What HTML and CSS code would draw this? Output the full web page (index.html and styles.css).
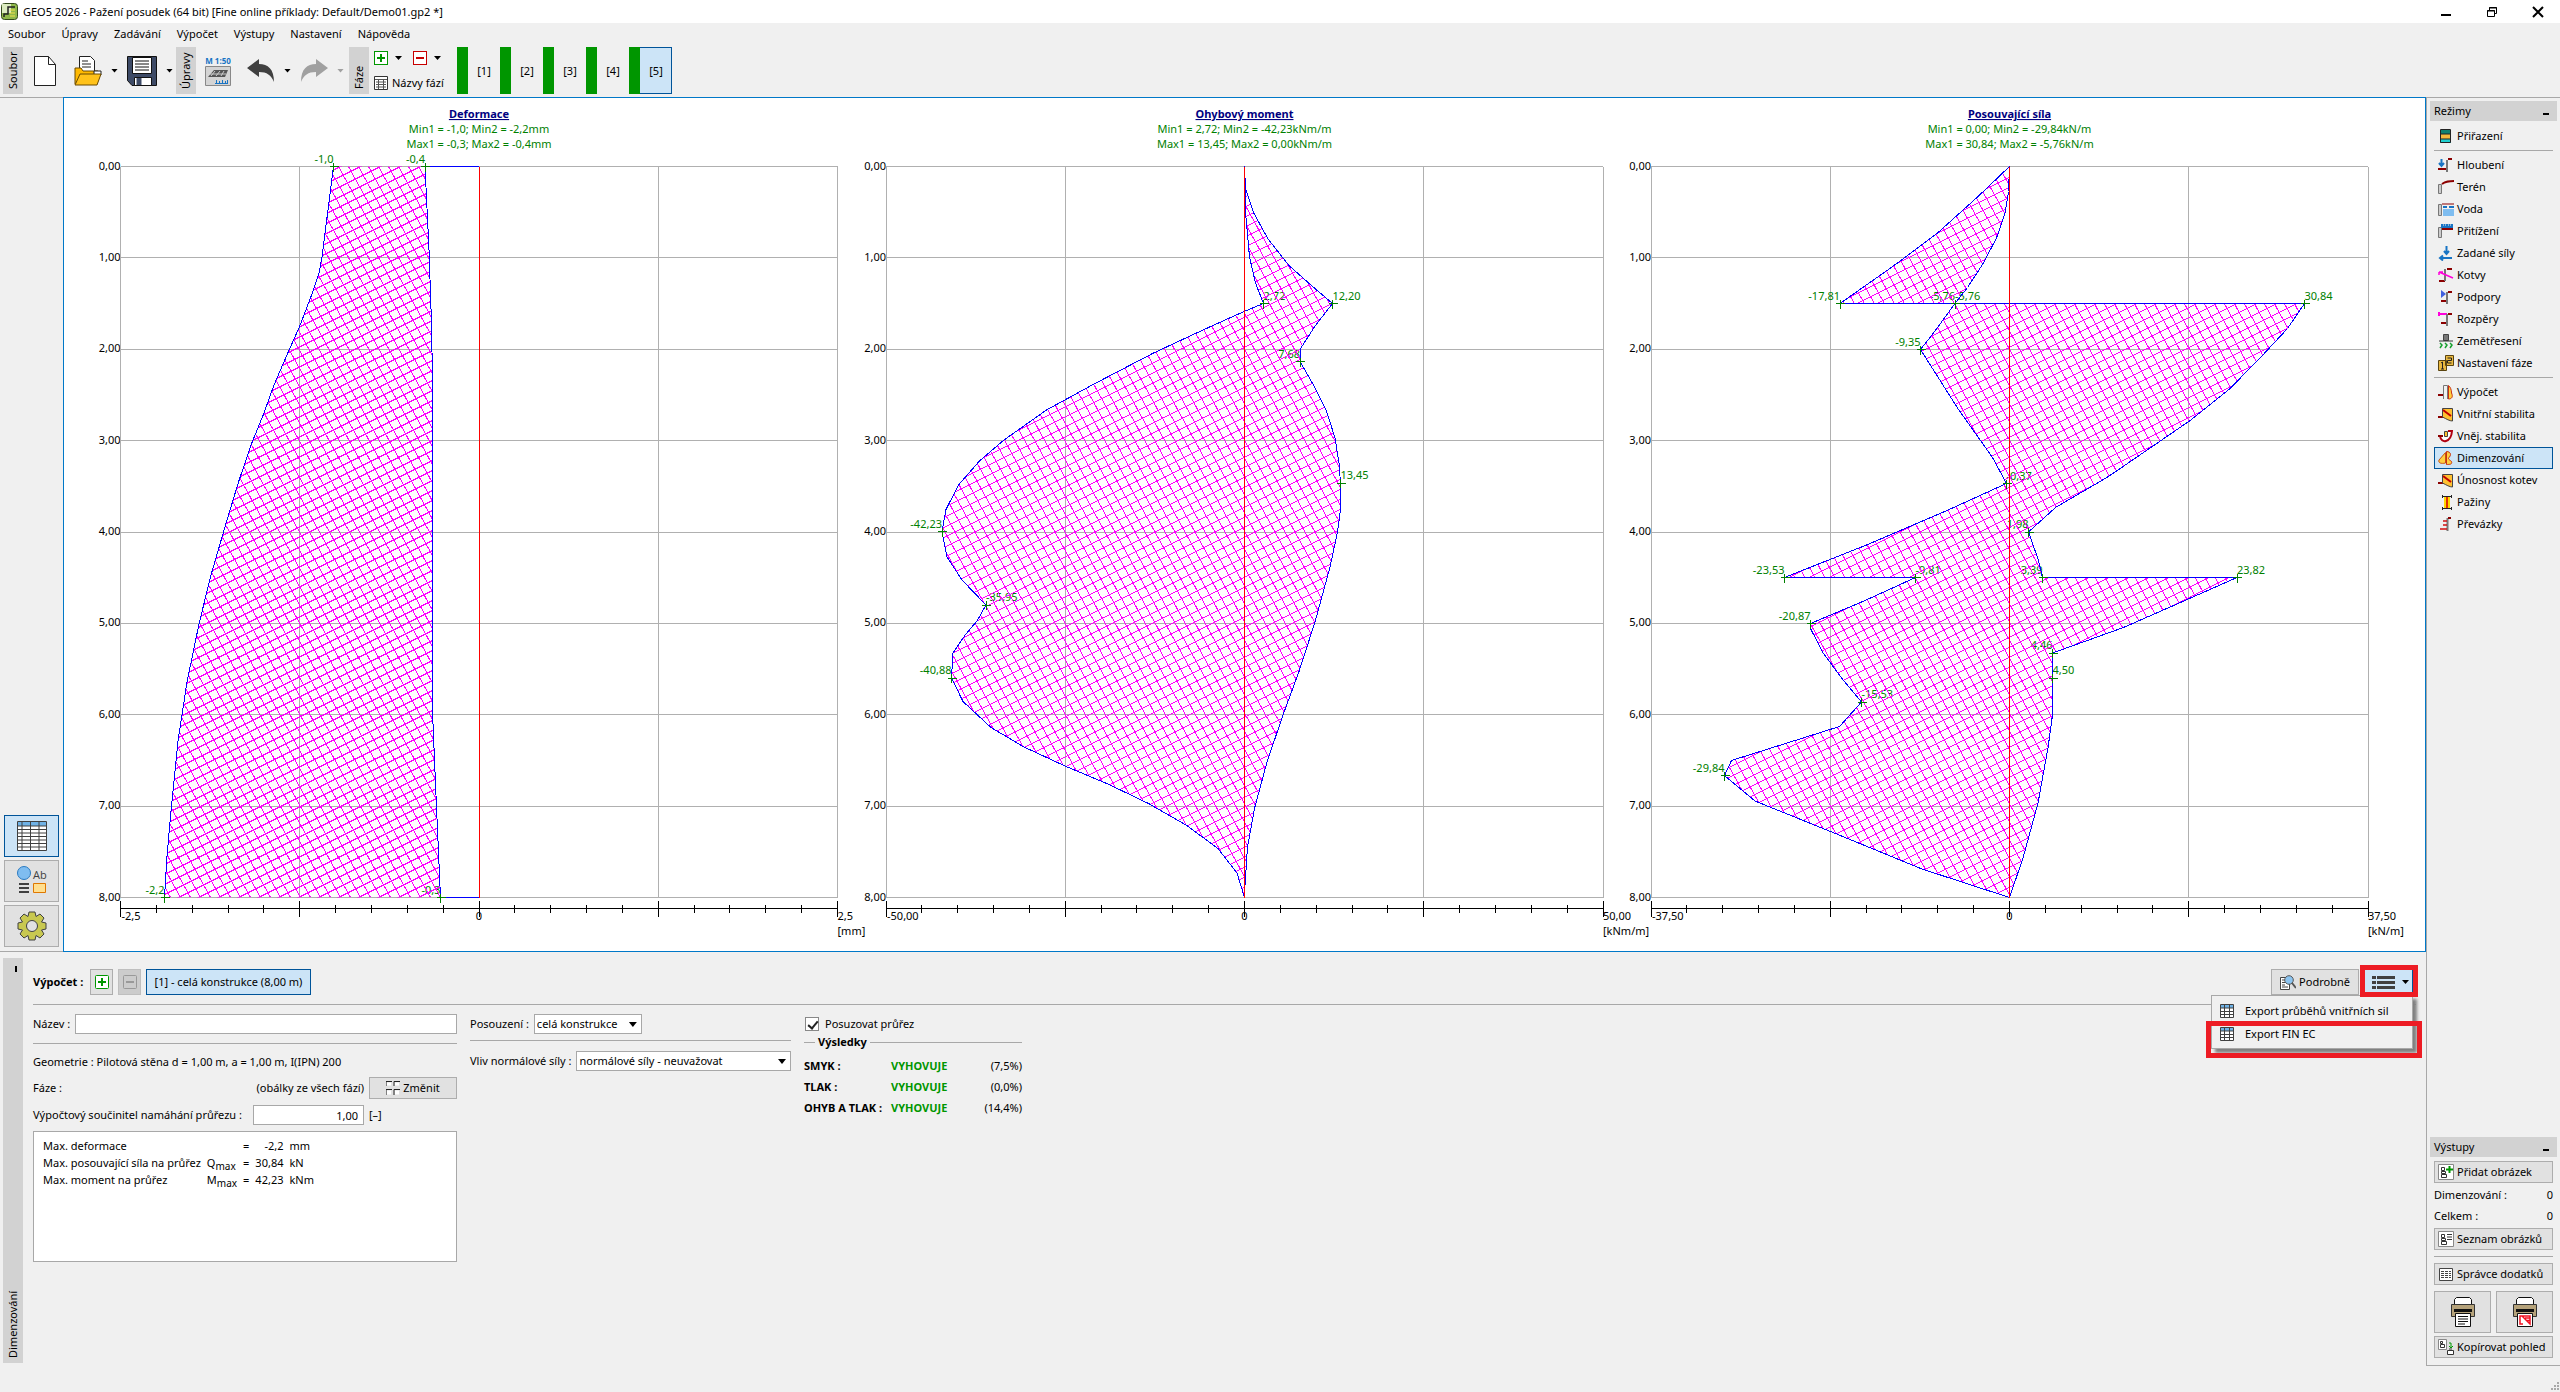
FILE: index.html
```html
<!DOCTYPE html>
<html lang="cs">
<head>
<meta charset="utf-8">
<title>GEO5 2026 - Pažení posudek</title>
<link rel="stylesheet" href="styles.css">
</head>
<body>
<header class="titlebar">
  <svg class="app-icon" width="17" height="17" viewBox="0 0 17 17"><rect x=".5" y=".5" width="16" height="16" rx="3" fill="#8fb84a" stroke="#33491c"/><path d="M1 1h9v9H1z" fill="#dcebc0"/><path d="M3 14V11H7V4H14" fill="none" stroke="#222" stroke-width="1.5"/><path d="M9 7h5M9 10h5M9 13h5" stroke="#f4e04a"/></svg>
  <h1 class="title">GEO5 2026 - Pažení posudek (64 bit) [Fine online příklady: Default/Demo01.gp2 *]</h1>
  <div class="window-buttons">
    <button aria-label="Minimalizovat"><svg width="12" height="12" viewBox="0 0 12 12"><path d="M1 9h10" stroke="#000" stroke-width="2"/></svg></button>
    <button aria-label="Obnovit"><svg width="12" height="12" viewBox="0 0 12 12" fill="none" stroke="#000"><path d="M1.500 4.500h7v6h-7zM1 5h8M3.500 4V1.500h7v6H9M3 2h8"/></svg></button>
    <button aria-label="Zavřít"><svg width="12" height="12" viewBox="0 0 12 12"><path d="M1 1l10 10M11 1L1 11" stroke="#000" stroke-width="2"/></svg></button>
  </div>
</header>
<nav class="menubar">
  <button>Soubor</button><button>Úpravy</button><button>Zadávání</button><button>Výpočet</button><button>Výstupy</button><button>Nastavení</button><button>Nápověda</button>
</nav>
<div class="toolbar">
  <span class="grip">Soubor</span>
  <div class="tools tools-file">
    <button aria-label="Nový"><svg width="22" height="30" viewBox="0 0 22 30"><path d="M.5.5h14l7 8v21H.5z" fill="#fff" stroke="#222"/><path d="M14.500.5v8h7" fill="none" stroke="#222"/></svg></button>
    <button aria-label="Otevřít"><svg width="28" height="30" viewBox="0 0 28 30"><path d="M5.500.5h11l4 4v15h-15z" fill="#fff" stroke="#222"/><path d="M8 5h6M8 8h9M8 11h9" stroke="#222"/><path d="M1 28V12h6l2 3h15v3" fill="#ffb900" stroke="#6b4a00"/><path d="M20 15h7v4h-7z" fill="#fff" stroke="#222"/><path d="M1 29l5-11h21l-4 11z" fill="#ffc21a" stroke="#6b4a00"/></svg></button>
    <button class="drop" aria-label="Poslední soubory"><i class="caret"></i></button>
    <button aria-label="Uložit"><svg width="30" height="30" viewBox="0 0 30 30"><path d="M.5.5h29v29H5l-4.500-5z" fill="#3d4a66" stroke="#111"/><path d="M5.500 1.500h19v16h-19z" fill="#fff" stroke="#111"/><path d="M8 5h14M8 8h14M8 11h14M8 14h14" stroke="#111"/><path d="M7.500 21.500h17v8h-17z" fill="#fff" stroke="#111"/><path d="M9.500 22h5v7h-5z" fill="#3d4a66"/></svg></button>
    <button class="drop" aria-label="Uložit jako"><i class="caret"></i></button>
  </div>
  <span class="grip">Úpravy</span>
  <div class="tools tools-edit">
    <button aria-label="Měřítko"><svg width="26" height="30" viewBox="0 0 26 30"><text x="13" y="8" text-anchor="middle" class="scale-text">M 1:50</text><path d="M.5 10.500h25v19H.5z" fill="#d4d4d4" stroke="#888"/><path d="M3 21l6-7h14l-3 7z" fill="#555"/><path d="M6 20l4-5M11 20l4-5M16 20l3-5M5 18h16" stroke="#ccc"/><path d="M10 27.500h13M11.500 27v-3M14.500 27v-2M17.500 27v-3M20.500 27v-2M22.500 27v-3" stroke="#1874c4"/></svg></button>
    <button aria-label="Zpět"><svg width="28" height="24" viewBox="0 0 28 24"><path d="M0 9L12 0v5c9 0 15 5 15 18-3-7-7-10-15-10v5z" fill="#404040"/></svg></button>
    <button class="drop" aria-label="Historie zpět"><i class="caret"></i></button>
    <button aria-label="Znovu" disabled><svg width="28" height="24" viewBox="0 0 28 24"><path d="M28 9L16 0v5C7 5 1 10 1 23c3-7 7-10 15-10v5z" fill="#a0a0a0"/></svg></button>
    <button class="drop" aria-label="Historie znovu" disabled><i class="caret caret-off"></i></button>
  </div>
  <span class="grip">Fáze</span>
  <div class="stage-tools">
    <div class="stage-row">
      <button aria-label="Přidat fázi"><svg width="14" height="14" viewBox="0 0 14 14"><rect x=".5" y=".5" width="13" height="13" fill="#fff" stroke="#009600"/><path d="M7 3v8M3 7h8" stroke="#009600" stroke-width="2"/></svg></button><i class="caret"></i>
      <button aria-label="Odebrat fázi"><svg width="14" height="14" viewBox="0 0 14 14"><rect x=".5" y=".5" width="13" height="13" fill="#fff" stroke="#c80000"/><path d="M3 7h8" stroke="#c80000" stroke-width="2"/></svg></button><i class="caret"></i>
    </div>
    <button class="stage-names"><svg width="14" height="14" viewBox="0 0 14 14"><path d="M.5.5h13v13H.5z" fill="#fff" stroke="#333"/><path d="M1 3.500h12M2 6h10M2 8.500h10M2 11h10M4.500 3v10M9.500 3v10" stroke="#555"/></svg>Názvy fází</button>
  </div>
  <div class="stages">
    <button>[1]</button><button>[2]</button><button>[3]</button><button>[4]</button><button class="active">[5]</button>
  </div>
</div>
<main class="workspace">
  <div class="work">
    <div class="view">
      <aside class="view-tools">
        <button class="active" aria-label="Tabulka"><svg width="30" height="30" viewBox="0 0 30 30"><path d="M.5.5h29v29H.5z" fill="#fff" stroke="#404040"/><path d="M1 1h28v4H1z" fill="#6fb2e6"/><path d="M1 5h28M1 8.500h28M1 12h28M1 15.500h28M1 19h28M1 22.500h28M1 26h28M5 1v28M13.500 1v28M22 1v28" stroke="#404040"/></svg></button>
        <button aria-label="Nastavení kreslení"><svg width="30" height="30" viewBox="0 0 30 30"><circle cx="7" cy="7" r="6.500" fill="#7fbdf0" stroke="#2a7ac0"/><text x="16" y="13" class="ab-text">Ab</text><path d="M2 18h10M2 22h10M2 26h10" stroke="#404040" stroke-width="2"/><path d="M16.500 17.500h12v9h-12z" fill="#ffdf90" stroke="#e07800"/></svg></button>
        <button aria-label="Nastavení"><svg width="30" height="30" viewBox="-15 -15 30 30"><path d="M-3-14H3L4-9.500 8-12 12-8 9.500-4 14-3V3L9.500 4 12 8 8 12 4 9.500 3 14H-3L-4 9.500-8 12-12 8-9.500 4-14 3V-3L-9.500-4-12-8-8-12-4-9.500z" fill="#c8c850" stroke="#404040"/><circle r="5.500" fill="#e1e1e1" stroke="#404040"/></svg></button>
      </aside>
      <section class="canvas"><svg id="charts" viewBox="64 98 2361 853" role="img" aria-label="Průběhy deformace, momentu a posouvající síly"></svg></section>
    </div>
    <section class="panel">
      <span class="grip panel-grip"><b class="panel-min"></b>Dimenzování</span>
      <div class="panel-body">
        <div class="calc-bar">
          <strong>Výpočet :</strong>
          <button class="btn square" aria-label="Přidat výpočet"><svg width="14" height="14" viewBox="0 0 14 14"><rect x=".5" y=".5" width="13" height="13" rx="1" fill="#fff" stroke="#009600"/><path d="M7 3v8M3 7h8" stroke="#009600" stroke-width="2"/></svg></button>
          <button class="btn square off" aria-label="Odebrat výpočet" disabled><svg width="14" height="14" viewBox="0 0 14 14"><rect x=".5" y=".5" width="13" height="13" rx="1" fill="none" stroke="#999"/><path d="M3 7h8" stroke="#999" stroke-width="2"/></svg></button>
          <button class="btn picked">[1] - celá konstrukce (8,00 m)</button>
          <div class="calc-right">
            <button class="btn detail"><svg width="16" height="15" viewBox="0 0 16 15"><path d="M.5 2.500h9v12h-9z" fill="#fff" stroke="#444"/><path d="M2 5h3M2 7.500h3M2 10h3M2 12h6" stroke="#444"/><circle cx="9" cy="5" r="4.300" fill="#8cc4f0" stroke="#555"/><path d="M12 8l4 5" stroke="#555" stroke-width="2"/></svg>Podrobně</button>
            <div class="export">
              <button class="export-btn" aria-label="Export"><svg width="23" height="13" viewBox="0 0 23 13"><path d="M0 1.500h4M0 6.500h4M0 11.500h4M5 1.500h18M5 6.500h18M5 11.500h18" stroke="#404040" stroke-width="3"/></svg><i class="caret"></i></button>
              <div class="popup">
                <button><svg width="14" height="14" viewBox="0 0 14 14"><path d="M.5.5h13v13H.5z" fill="#fff"/><path d="M1 1h12v3H1z" fill="#6fb2e6"/><path d="M.5.5h13v13H.5zM1 4h12M1 7.500h12M1 10.500h12M4.500 1v12M9.500 1v12" fill="none" stroke="#404040"/></svg>Export průběhů vnitřních sil</button>
                <button><svg width="14" height="14" viewBox="0 0 14 14"><path d="M.5.5h13v13H.5z" fill="#fff"/><path d="M1 1h12v3H1z" fill="#6fb2e6"/><path d="M.5.5h13v13H.5zM1 4h12M1 7.500h12M1 10.500h12M4.500 1v12M9.500 1v12" fill="none" stroke="#404040"/></svg>Export FIN EC</button>
              </div>
              <span class="mark mark-button"></span>
              <span class="mark mark-item"></span>
            </div>
          </div>
        </div>
        <div class="columns">
          <div class="col">
            <div class="field"><label for="name">Název :</label><input id="name" class="grow" type="text"></div>
            <hr>
            <p class="geometry">Geometrie : Pilotová stěna d = 1,00 m, a = 1,00 m, I(IPN) 200</p>
            <div class="field stage-field"><span>Fáze :</span><span class="push">(obálky ze všech fází)</span><button class="btn change"><svg width="14" height="14" viewBox="0 0 14 14"><path d="M0 5V.5h6M8 5V.5h6M0 14V8.500h6M8 14V8.500h6" fill="none" stroke="#222"/><path d="M1 1.500h4v3H1zM9 1.500h4v3H9zM1 9.500h4v4H1zM9 9.500h4v4H9z" fill="#fff"/></svg>Změnit</button></div>
            <div class="field factor"><label for="factor">Výpočtový součinitel namáhání průřezu :</label><input id="factor" class="num push" type="text" value="1,00"><span class="unit">[–]</span></div>
            <div class="summary"><table>
              <tr><td>Max. deformace</td><td></td><td>=</td><td class="r">-2,2</td><td>mm</td></tr>
              <tr><td>Max. posouvající síla na průřez</td><td>Q<sub>max</sub></td><td>=</td><td class="r">30,84</td><td>kN</td></tr>
              <tr><td>Max. moment na průřez</td><td>M<sub>max</sub></td><td>=</td><td class="r">42,23</td><td>kNm</td></tr>
            </table></div>
          </div>
          <div class="col col-mid">
            <div class="field"><label for="scope">Posouzení :</label><span class="select scope"><select id="scope"><option>celá konstrukce</option></select></span></div>
            <hr>
            <div class="field"><label for="normal">Vliv normálové síly :</label><span class="select grow"><select id="normal"><option>normálové síly - neuvažovat</option></select></span></div>
          </div>
          <div class="col col-results">
            <label class="check"><input type="checkbox" checked>Posuzovat průřez</label>
            <h2>Výsledky</h2>
            <table class="results">
              <tr><th>SMYK :</th><td class="ok">VYHOVUJE</td><td class="r">(7,5%)</td></tr>
              <tr><th>TLAK :</th><td class="ok">VYHOVUJE</td><td class="r">(0,0%)</td></tr>
              <tr><th>OHYB A TLAK :</th><td class="ok">VYHOVUJE</td><td class="r">(14,4%)</td></tr>
            </table>
          </div>
        </div>
      </div>
    </section>
  </div>
  <aside class="sidebar">
    <h2 class="side-head">Režimy<i></i></h2>
    <div class="modes">
      <button><svg viewBox="0 0 16 16"><path d="M2 2h11v13H2z" fill="#f4b83c"/><path d="M2 2h11v4H2z" fill="#108070"/><path d="M2 11h11v4H2z" fill="#20d0d0"/><path d="M2.500 1.500h10v13h-10zM2 6h11M2 11h11" fill="none" stroke="#222"/></svg>Přiřazení</button>
      <hr>
      <button><svg viewBox="0 0 16 16"><path d="M3.500 2v6M1 6l2.500 3L6 6" fill="none" stroke="#1874c4" stroke-width="2"/><path d="M0 12h8M10 2h4" stroke="#8b0000" stroke-width="2"/><path d="M9 15V3" stroke="#777" stroke-width="2"/></svg>Hloubení</button>
      <button><svg viewBox="0 0 16 16"><path d="M.5 5.500h3v9h-3z" fill="#ccc" stroke="#777"/><path d="M4 5c4-3 7-3 12-3" fill="none" stroke="#8b0000" stroke-width="2"/></svg>Terén</button>
      <button><svg viewBox="0 0 16 16"><path d="M.5 3.500h3v11h-3z" fill="#ccc" stroke="#777"/><path d="M5 8h11v7H5z" fill="#7fbdf0"/><path d="M4 3h12" stroke="#8b0000"/><path d="M5 6h4M11 6h5" stroke="#1874c4" stroke-width="2"/></svg>Voda</button>
      <button><svg viewBox="0 0 16 16"><path d="M.5 4.500h3v10h-3z" fill="#ccc" stroke="#777"/><path d="M4 6h11" stroke="#8b0000" stroke-width="2"/><path d="M3 4h12M4 1v3M6.500 1v3M9 1v3M11.500 1v3M14 1v3" stroke="#1874c4" stroke-width="2"/></svg>Přitížení</button>
      <button><svg viewBox="0 0 16 16"><path d="M8.500 1v7M6 6l2.500 3L11 6M14 13H3M5 10.500L2 13l3 2.500" fill="none" stroke="#1874c4" stroke-width="2"/></svg>Zadané síly</button>
      <button><svg viewBox="0 0 16 16"><path d="M9 2h5M1 14h6" stroke="#8b0000" stroke-width="2"/><path d="M7 14V2" stroke="#777" stroke-width="2"/><path d="M1 5l14 6M1 5v3M1 5h4" fill="none" stroke="#ff00dc" stroke-width="1.500"/></svg>Kotvy</button>
      <button><svg viewBox="0 0 16 16"><path d="M3 1l5 4-5 4z" fill="#4060e0"/><path d="M10 3h4M3 12h5" stroke="#8b0000" stroke-width="2"/><path d="M9 15V3" stroke="#777" stroke-width="2"/></svg>Podpory</button>
      <button><svg viewBox="0 0 16 16"><path d="M0 3h9M1 1v4" stroke="#ff00dc" stroke-width="2"/><path d="M10 3h4M3 12h5" stroke="#8b0000" stroke-width="2"/><path d="M9 15V3" stroke="#777" stroke-width="2"/></svg>Rozpěry</button>
      <button><svg viewBox="0 0 16 16"><path d="M5.500 1.500h5v6h-5z" fill="#777" stroke="#444"/><path d="M1 8h14" stroke="#333"/><path d="M2 10l2 2-2 3M7 10l2 2-2 3M12 10l2 2-2 3" fill="none" stroke="#18a030" stroke-width="1.500"/></svg>Zemětřesení</button>
      <button><svg viewBox="0 0 16 16"><path d="M.5 5.500h8v10h-8zM7.500.5h8v10h-8z" fill="#e8b840" stroke="#5a4410"/><path d="M3 8l1.500-1v7M3 14h3M9.500 3h4v2.500h-4V8h4" fill="none" stroke="#222"/></svg>Nastavení fáze</button>
      <hr>
      <button><svg viewBox="0 0 16 16"><path d="M0 11h5" stroke="#8b0000" stroke-width="2"/><path d="M5.500 15V1.500h4V15" fill="none" stroke="#777"/><path d="M10.500 1.500V15c3 0 5-2 3-6 0-3-1-6-3-7.500z" fill="#ffd040" stroke="#c83010"/></svg>Výpočet</button>
      <button><svg viewBox="0 0 16 16"><path d="M0 11h5" stroke="#8b0000" stroke-width="2"/><path d="M4.500 2.500h10V15c-3 0-6-2-10-4z" fill="#ffc030" stroke="#444"/><path d="M5 4l8 6" stroke="#c00000" stroke-width="2"/></svg>Vnitřní stabilita</button>
      <button><svg viewBox="0 0 16 16"><path d="M2 8c1 8 11 7 12-5h-4" fill="#fff" stroke="#b00010" stroke-width="2"/><path d="M0 8h5" stroke="#8b0000" stroke-width="2"/><path d="M6.500 3.500h3v5h-3z" fill="#ffc030" stroke="#444"/></svg>Vněj. stabilita</button>
      <button class="active"><svg viewBox="0 0 16 16"><path d="M7.500 2.500L1 10c-1 3 2 4 6.500 3z" fill="#ffd040" stroke="#c85010"/><path d="M8.500 1.500v13c3 0 6 0 5-3-1-1-3-2-3-3s2-2 2-4-2-3-4-3z" fill="#ffd040" stroke="#c83010"/></svg>Dimenzování</button>
      <button><svg viewBox="0 0 16 16"><path d="M0 11h5" stroke="#8b0000" stroke-width="2"/><path d="M4.500 2.500h10V15c-3 0-6-2-10-4z" fill="#ffc030" stroke="#444"/><path d="M5 4l8 6" stroke="#c00000" stroke-width="2"/></svg>Únosnost kotev</button>
      <button><svg viewBox="0 0 16 16"><path d="M6 3h6v11H6z" fill="#ffd800"/><path d="M9 3v11" stroke="#e03000" stroke-width="2"/><path d="M4 2.500h10M4 14.500h10M4.500 1v3M13.500 1v3M4.500 13v3M13.500 13v3" stroke="#222"/></svg>Pažiny</button>
      <button><svg viewBox="0 0 16 16"><path d="M9.500 15V2" stroke="#777" stroke-width="2"/><path d="M10 2h3" stroke="#8b0000" stroke-width="2"/><path d="M5 5h4M5 9h4M2 13h7" stroke="#d01010" stroke-width="1.500"/></svg>Převázky</button>
    </div>
    <div class="outputs">
      <h2 class="side-head">Výstupy<i></i></h2>
      <div class="output-body">
        <button class="btn"><svg width="16" height="16" viewBox="0 0 16 16"><path d="M.5.5h15v15H.5z" fill="#fff" stroke="#888"/><path d="M3.500 3.500h3v3h-3zM3.500 7.500h4v2h-4zM3.500 10.500h5v3h-5z" fill="none" stroke="#333"/><path d="M11.500 2v7M8 5.500h7" stroke="#009600" stroke-width="2"/></svg>Přidat obrázek</button>
        <p><span>Dimenzování :</span><span>0</span></p>
        <p><span>Celkem :</span><span>0</span></p>
        <button class="btn"><svg width="16" height="16" viewBox="0 0 16 16"><path d="M.5.5h15v15H.5z" fill="#fff" stroke="#888"/><path d="M3.500 3.500h3v3h-3zM3.500 7.500h4v2h-4zM3.500 10.500h5v3h-5z" fill="none" stroke="#333"/><path d="M9 3.500h5M9 6h5M9 8.500h5" stroke="#333"/></svg>Seznam obrázků</button>
        <hr>
        <button class="btn"><svg width="16" height="16" viewBox="0 0 16 16"><path d="M1.500 2.500h13v12h-13z" fill="#fff" stroke="#444"/><path d="M3 5.500h10M3 7.500h10M3 9.500h10M3 11.500h10" stroke="#444" stroke-dasharray="3 1"/></svg>Správce dodatků</button>
        <div class="printers">
          <button class="btn" aria-label="Tisk"><svg width="26" height="30" viewBox="0 0 26 30"><path d="M4.500 8V2.500l2-2h13l2 2V8z" fill="#fff" stroke="#111"/><path d="M1.500 7.500h23v12h-23z" fill="#b5a27a" stroke="#333"/><path d="M4 13.500h18" stroke="#111" stroke-width="3"/><path d="M5.500 16.500h15v13h-15z" fill="#fff" stroke="#111"/><path d="M8 19.500h10M8 22h10M8 24.500h10M8 27h7" stroke="#111"/></svg></button>
          <button class="btn" aria-label="Tisk výběru"><svg width="26" height="30" viewBox="0 0 26 30"><path d="M4.500 8V2.500l2-2h13l2 2V8z" fill="#fff" stroke="#111"/><path d="M1.500 7.500h23v12h-23z" fill="#b5a27a" stroke="#333"/><path d="M4 13.500h18" stroke="#111" stroke-width="3"/><path d="M5.500 16.500h15v13h-15z" fill="#fff" stroke="#111"/><path d="M10 19H8v8h3M10 19h8v8zM13 21h5M15 23.500h3" fill="none" stroke="#f01020" stroke-width="1.500"/></svg></button>
        </div>
        <button class="btn"><svg width="16" height="16" viewBox="0 0 16 16"><path d="M.5.5h8v10h-8z" fill="#fff" stroke="#888"/><path d="M2.500 2.500h2v2h-2zM2.500 5.500h4v3h-4z" fill="none" stroke="#333"/><path d="M11 4h2v5M11 7l2 2 2-2" fill="none" stroke="#009600"/><path d="M9.500 11.500h6v4h-6zM11 10h3" fill="#fff" stroke="#333"/></svg>Kopírovat pohled</button>
      </div>
    </div>
  </aside>
</main>
<footer class="statusbar"><svg width="10" height="9" viewBox="0 0 10 9" fill="#a8a8a8"><path d="M7 0h2v2H7zM4 3h2v2H4zM7 3h2v2H7zM1 6h2v2H1zM4 6h2v2H4zM7 6h2v2H7z"/></svg></footer>
<script src="charts.js"></script>
</body>
</html>
```
FILE: styles.css
```css
* { box-sizing: border-box; }
html, body { margin: 0; }
body {
  min-height: 100vh;
  display: flex;
  flex-direction: column;
  background: #f0f0f0;
  color: #000;
  font: 11px/16px "Noto Sans", "Open Sans", sans-serif;
}
button, input, select { font: inherit; color: inherit; margin: 0; padding: 0; }
button { border: 0; background: none; display: inline-flex; align-items: center; text-align: left; white-space: nowrap; }
svg { flex: none; display: block; }
h1, h2, p { margin: 0; font: inherit; }
hr { margin: 0; border: 0; border-top: 1px solid #a8a8a8; width: 100%; }
label, span { white-space: nowrap; }

.caret { width: 7px; height: 4px; background: #000; clip-path: polygon(0 0, 100% 0, 50% 100%); }
.caret-off { background: #a0a0a0; }

.titlebar { height: 23px; background: #fff; display: flex; align-items: center; padding: 0 16px 0 1px; }
.title { margin-left: 5px; }
.window-buttons { margin-left: auto; display: flex; gap: 34px; }

.menubar { height: 21px; display: flex; align-items: center; gap: 16px; padding-left: 8px; }

.toolbar { height: 53px; display: flex; align-items: flex-start; padding: 3px 0 0 3px; }
.grip {
  width: 20px; height: 47px; background: #d2d2d2;
  writing-mode: vertical-rl; transform: rotate(180deg);
  display: flex; align-items: center; justify-content: flex-start; padding-top: 5px;
  line-height: 20px;
}
.tools { display: flex; align-items: center; height: 47px; }
.tools-file { width: 153px; padding-left: 11px; gap: 9px; }
.tools-file button:nth-child(2) { margin-left: 9px; }
.tools-edit { width: 153px; padding-left: 9px; gap: 9px; }
.tools-edit button:nth-child(2) { margin-left: 7px; }
.scale-text { font: bold 8px "Open Sans", sans-serif; fill: #1874c4; }
.ab-text { font: 11px "Open Sans", sans-serif; fill: #404040; }
.stage-tools { width: 88px; padding: 4px 0 0 5px; }
.stage-row { display: flex; align-items: center; gap: 7px; height: 14px; }
.stage-row .caret:first-of-type { margin-right: 4px; }
.stage-names { gap: 4px; height: 16px; margin-top: 10px; }
.stages { display: flex; }
.stages button { width: 43px; height: 47px; justify-content: center; position: relative; padding-left: 11px; }
.stages button::before { content: ""; position: absolute; left: 0; top: 0; bottom: 0; width: 11px; background: #009600; }
.stages .active { background: #cce4f7; outline: 1px solid #005499; outline-offset: -1px; }

.workspace { flex: 1; display: flex; }
.work { flex: 1; min-width: 0; display: flex; flex-direction: column; }
.view { display: flex; }
.view-tools { width: 63px; flex: none; border-top: 1px solid #a8a8a8; border-bottom: 1px solid #a8a8a8; display: flex; flex-direction: column; justify-content: flex-end; gap: 3px; padding: 0 4px 4px; }
.view-tools button { height: 42px; justify-content: center; background: #e1e1e1; border: 1px solid #adadad; }
.view-tools .active { background: #cce4f7; border-color: #005499; }
.canvas { flex: 1; min-width: 0; background: #fff; border: 1px solid #0078c8; }
.canvas svg { width: 100%; height: auto; }

#charts text { font: 11px "Noto Sans", "Open Sans", sans-serif; }
#charts .head { font-weight: bold; fill: #000080; text-decoration: underline; }
#charts .green { fill: #008000; }
#charts path { fill: none; shape-rendering: crispEdges; }
#charts .grid { stroke: #b0b0b0; }
#charts .hatch { stroke: #ff00ff; }
#charts .outline { stroke: #0000ff; }
#charts .zero { stroke: #ff0000; }
#charts .axis { stroke: #000; }
#charts .cross { stroke: #008000; }
.start { text-anchor: start; }
.middle { text-anchor: middle; }
.end { text-anchor: end; }

.panel { flex: 1; display: flex; padding: 6px 10px 3px 3px; }
.panel-grip { height: auto; justify-content: flex-start; position: relative; }
.panel-min { position: absolute; left: 6px; bottom: 8px; width: 2px; height: 6px; background: #000; }
.panel-body { flex: 1; min-width: 0; padding: 11px 0 0 10px; }
.btn { height: 22px; border: 1px solid #adadad; background: #e1e1e1; justify-content: center; gap: 3px; }
.calc-bar { display: flex; align-items: center; height: 36px; padding-bottom: 9px; border-bottom: 1px solid #a8a8a8; gap: 5px; }
.calc-bar .btn { height: 26px; }
.calc-bar strong { width: 52px; white-space: nowrap; }
.square { width: 23px; }
.off { background: #ccc; border-color: #bfbfbf; }
.calc-bar .picked { width: 165px; background: #cce4f7; border-color: #005499; }
.calc-right { margin-left: auto; display: flex; gap: 4px; padding-right: 3px; }
.detail { width: 88px; }
.export { position: relative; }
.export-btn { width: 50px; height: 26px; padding-left: 8px; gap: 7px; background: #cce4f7; border: 1px solid #005499; }
.popup { position: absolute; right: 0; top: 26px; width: 202px; height: 54px; padding: 3px 2px; background: #f0f0f0; border: 1px solid #a8a8a8; box-shadow: 4px 4px 3px #808080; }
.popup button { width: 100%; height: 24px; padding-left: 6px; gap: 11px; }
.popup button:first-child { height: 23px; }
.mark { position: absolute; border: 5px solid #ed1c24; }
.mark-button { right: -5px; top: -4px; width: 58px; height: 32px; }
.mark-item { right: -9px; top: 52px; width: 216px; height: 37px; }

.columns { display: grid; grid-template-columns: 424px 321px 218px; gap: 13px; padding-top: 9px; }
.field { display: flex; align-items: center; gap: 5px; height: 20px; }
.grow { flex: 1; min-width: 0; }
.push { margin-left: auto; }
input[type="text"], select { height: 20px; background: #fff; border: 1px solid #a8a8a8; border-radius: 0; }
.col hr { margin-top: 9px; }
.geometry { margin-top: 10px; }
.stage-field { height: 22px; margin-top: 7px; }
.change { width: 88px; }
.factor { margin: 6px 0; }
.num { width: 111px; text-align: right; padding-right: 5px; }
.unit { width: 88px; }
.summary { height: 131px; background: #fff; border: 1px solid #a8a8a8; padding: 5px 0 0 9px; }
.summary table { border-spacing: 0; }
.summary td { padding: 0 6px 0 0; height: 17px; white-space: nowrap; }
.summary sub { line-height: 0; font-size: 10px; }
.r { text-align: right; }
.select { position: relative; display: block; }
.select select { appearance: none; width: 100%; padding: 0 2px; display: block; }
.select::after { content: ""; position: absolute; right: 5px; top: 8px; width: 8px; height: 5px; background: #000; clip-path: polygon(0 0, 100% 0, 50% 100%); pointer-events: none; }
.scope { width: 108px; }
.col-mid hr { margin: 6px 0 10px; }
.check { display: flex; align-items: center; gap: 6px; height: 18px; padding: 2px 0 0 1px; }
.check input { appearance: none; width: 14px; height: 14px; border: 1px solid #888; background: #fff; position: relative; }
.check input:checked::after { content: ""; position: absolute; left: 4px; top: 1px; width: 4px; height: 8px; border: solid #222; border-width: 0 2px 2px 0; transform: rotate(40deg); }
.col-results h2 { display: flex; align-items: center; gap: 3px; font-weight: bold; height: 16px; margin: 2px 0 5px; }
.col-results h2::before { content: ""; width: 11px; border-top: 1px solid #a8a8a8; }
.col-results h2::after { content: ""; flex: 1; border-top: 1px solid #a8a8a8; }
.results { width: 100%; border-spacing: 0; }
.results th, .results td { padding: 0; height: 21px; white-space: nowrap; }
.results th { width: 87px; text-align: left; }
.ok { color: #009600; font-weight: bold; }

.sidebar { width: 134px; flex: none; border: solid #a8a8a8; border-width: 1px 0 1px 1px; padding: 3px 3px 7px; display: flex; flex-direction: column; }
.side-head { height: 20px; background: #d2d2d2; display: flex; align-items: center; justify-content: space-between; padding: 0 8px 0 4px; }
.side-head i { width: 6px; height: 2px; background: #000; margin-top: 5px; }
.modes { display: flex; flex-direction: column; padding: 4px 4px 0; }
.modes button { height: 22px; border: 1px solid transparent; padding-left: 3px; gap: 3px; }
.modes svg { width: 16px; height: 16px; }
.modes hr { margin: 3px 0; }
.modes .active { background: #cce4f7; border-color: #005499; }
.outputs { margin-top: auto; }
.output-body { display: flex; flex-direction: column; padding: 4px 4px 0; }
.output-body > .btn { justify-content: flex-start; padding-left: 3px; }
.output-body p { display: flex; justify-content: space-between; height: 16px; margin: 4px 0 1px; }
.output-body p + .btn { margin-top: 3px; }
.output-body hr { margin: 6px 0; }
.printers { display: grid; grid-template-columns: 1fr 1fr; gap: 5px; margin: 6px 0 3px; }
.printers .btn { height: 42px; }
.statusbar { height: 26px; display: flex; justify-content: flex-end; align-items: flex-end; padding-bottom: 1px; }
```
FILE: charts.js
```js
// Chart geometry, in drawing units of the canvas.
const TOP = 166.5, METRE = 91.375, HALF = 358.5, AXIS = 908.5;

const charts = [
  {
    x: 479, title: "Deformace", unit: "[mm]", limits: ["-2,5", "2,5"],
    notes: ["Min1 = -1,0; Min2 = -2,2mm", "Max1 = -0,3; Max2 = -0,4mm"],
    left: [[333.5,166.5],[322,257],[319,273],[313.5,290],[299,328],[289.5,349],[274,385],[264,413],[251,445],[238.5,482],[227,520],[211,575],[199,624],[187,682],[178,741],[171,811],[167,856],[164.5,897.5]],
    right: [[425,166.5],[429,250],[431.5,323],[432.5,380],[432.5,712],[436.5,807],[440.5,897.5]],
    edges: [[[425,166.5],[479,166.5]], [[440.5,897.5],[479,897.5]]],
    marks: [[333.5,166.5,"-1,0","end"],[425,166.5,"-0,4","end"],[164.5,897.5,"-2,2","end"],[440.5,897.5,"-0,3","end"]]
  },
  {
    x: 1244.5, title: "Ohybový moment", unit: "[kNm/m]", limits: ["-50,00", "50,00"],
    notes: ["Min1 = 2,72; Min2 = -42,23kNm/m", "Max1 = 13,45; Max2 = 0,00kNm/m"],
    left: [[1244.5,166.5],[1245.5,212],[1249.5,257],[1255.5,283],[1263.5,303.5],[1244,311.5],[1203,330],[1153.5,353],[1094,384],[1046.5,410],[1004,440],[979.5,461],[958.5,485],[946,509.5],[942,531.5],[947,557],[962,580],[986,605],[977,621],[965.5,634.5],[953,653],[951.5,678],[963,701.5],[991,727.5],[1024,747],[1065,766],[1109,784.5],[1148.5,803.5],[1186,825],[1218,848.5],[1237,873],[1244.5,897.5]],
    right: [[1244.5,166.5],[1245.5,189],[1254,213.5],[1268,239],[1289,265.5],[1312,286],[1332.5,303.5],[1315,326],[1300,349.5],[1300,361.5],[1314,386],[1326.5,411],[1335,438],[1339,463],[1340.5,483],[1340.5,509.5],[1337.5,532],[1330,567],[1315,622],[1299,671.5],[1283,715],[1267,762],[1254.5,808.5],[1247.5,847],[1245,885],[1244.5,897.5]],
    edges: [],
    marks: [[1263.5,303.5,"2,72","start"],[1332.5,303.5,"12,20","start"],[1300,361.5,"7,68","end"],[1340.5,483,"13,45","start"],[942,531.5,"-42,23","end"],[986,605,"-35,95","start"],[951.5,678,"-40,88","end"]]
  },
  {
    x: 2009.5, title: "Posouvající síla", unit: "[kN/m]", limits: ["-37,50", "37,50"],
    notes: ["Min1 = 0,00; Min2 = -29,84kN/m", "Max1 = 30,84; Max2 = -5,76kN/m"],
    left: [[2009.5,166.5],[1977.5,197],[1937,233.5],[1892,267],[1840,303.5],[1955,303.5],[1932,335],[1920.5,349.5],[1957.5,408],[1992.5,457.5],[2006.5,483.5],[1942.5,512.5],[1866.5,545],[1784.5,577.5],[1915.5,577.5],[1864,601],[1810.5,623.5],[1810.5,628.5],[1822.5,652],[1841.5,678],[1861.5,702],[1839.5,726.5],[1731.5,760.5],[1724.5,775.5],[1755,801],[1830.5,831.5],[1922,869],[2009.5,897.5]],
    right: [[2009.5,166.5],[2008.5,191.5],[2005,213.5],[1996.5,238],[1982.5,264.5],[1967.5,287.5],[1955,303.5],[2304.5,303.5],[2287.5,328.5],[2260.5,357.5],[2229.5,389],[2189.5,421],[2108.5,476.5],[2055.5,507.5],[2028.5,532],[2038,559],[2042.5,577.5],[2237,577.5],[2189.5,598.5],[2123.5,627.5],[2052.5,653],[2052.5,715],[2048,748],[2038,803],[2023,858],[2009.5,897.5]],
    edges: [],
    marks: [[1840,303.5,"-17,81","end"],[1955,303.5,"-5,76","end"],[1955,303.5,"-5,76","start"],[2304.5,303.5,"30,84","start"],[1920.5,349.5,"-9,35","end"],[2006.5,483.5,"-0,37","start"],[2028.5,532,"1,98","end"],[1784.5,577.5,"-23,53","end"],[1915.5,577.5,"-9,81","start"],[2042.5,577.5,"3,39","end"],[2237,577.5,"23,82","start"],[1810.5,623.5,"-20,87","end"],[2052.5,653,"4,46","end"],[2052.5,678,"4,50","start"],[1861.5,702,"-15,53","start"],[1724.5,775.5,"-29,84","end"]]
  }
];

const line = pts => "M" + pts.map(p => p.join(" ")).join("L");
const path = (cls, d, extra = "") => `<path class="${cls}" d="${d}" ${extra}/>`;
const text = (cls, x, y, s) => `<text class="${cls}" x="${x}" y="${y}">${s}</text>`;

// Two perpendicular families of lines over the span of one chart.
function hatch(cx) {
  let d = "";
  const x0 = cx - HALF, x1 = cx + HALF, y0 = TOP, y1 = TOP + 8 * METRE;
  const shallow = 0.5 * (x1 - x0), steep = 0.55 * (y1 - y0);
  for (let y = y0; y < y1 + shallow; y += 10) d += `M${x0} ${y}L${x1} ${y - shallow}`;
  for (let x = x0 - steep; x < x1; x += 10) d += `M${x} ${y0}L${x + steep} ${y1}`;
  return d;
}

let out = "";
charts.forEach((c, i) => {
  const l = c.x - HALF, r = c.x + HALF, bottom = TOP + 8 * METRE;
  let grid = "", axis = `M${l} ${AXIS}H${r}`;
  for (let n = 0; n <= 8; n++) {
    const y = TOP + n * METRE;
    grid += `M${l} ${y}H${r}`;
    out += text("end", l, y + 3, `${n},00`);
  }
  for (let n = 0; n <= 4; n++) grid += `M${l + n * HALF / 2} ${TOP}V${bottom}`;
  for (let n = 0; n <= 20; n++) {
    const big = n % 5 === 0;
    axis += `M${l + n * HALF / 10} ${big ? 901 : 905}V${big ? 917 : 913}`;
  }
  out += path("grid", grid);
  out += text("head middle", c.x, 118, c.title);
  out += text("green middle", c.x, 133, c.notes[0]) + text("green middle", c.x, 148, c.notes[1]);
  c.marks.forEach(m => out += text("green " + m[3], m[0], m[1] - 4, m[2]));
  const shape = line(c.left.concat([...c.right].reverse())) + "Z";
  out += `<clipPath id="area${i}"><path d="${shape}"/></clipPath>`;
  out += path("hatch", hatch(c.x), `clip-path="url(#area${i})"`);
  out += path("outline", line(c.left) + line(c.right) + c.edges.map(line).join(""));
  out += path("zero", `M${c.x} ${TOP}V${bottom}`);
  out += path("cross", c.marks.map(m => `M${m[0] - 4} ${m[1]}h9M${m[0]} ${m[1] - 4}v9`).join(""));
  out += path("axis", axis);
  out += text("start", l + 1, 920, c.limits[0]) + text("middle", c.x, 920, "0") + text("start", r, 920, c.limits[1]);
  out += text("start", r, 935, c.unit);
});
document.getElementById("charts").innerHTML = out;
```
